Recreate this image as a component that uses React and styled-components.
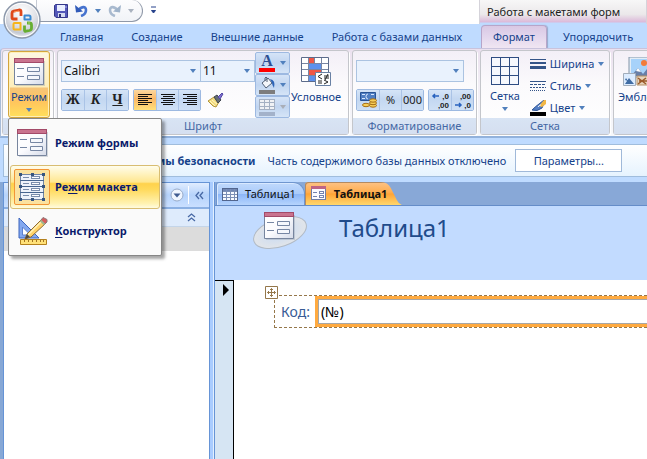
import React from "react";
import styled, { createGlobalStyle, css } from "styled-components";

const GlobalStyle = createGlobalStyle`
  *, *::before, *::after { box-sizing: border-box; }
  body {
    margin: 0;
    background: #fff;
    font: 11px/16px "Noto Sans", "Open Sans", sans-serif;
    color: #15428b;
  }
  #root { height: 100vh; }
  button, input, select { font: inherit; color: inherit; margin: 0; }
  button { background: none; border: 0; padding: 0; cursor: default; }
  svg { display: block; flex: none; }
  u { text-underline-offset: 2px; }
`;

/* ---------- page frame ---------- */
const Page = styled.div`
  display: flex;
  flex-direction: column;
  min-width: 0;
  min-height: 100vh;
  overflow: clip;
  background: #bfdbff;
`;

const Header = styled.header`
  position: relative;
  display: flex;
  white-space: nowrap;
  background: linear-gradient(#fff 24px, #bfdbff 24px);
`;

const OfficeButton = styled.button`
  position: absolute;
  left: 3px;
  top: 1px;
  z-index: 2;
`;

const MainTabs = styled.div`
  display: flex;
  flex-direction: column;
  padding-left: 36px;
`;

const TitleRow = styled.div`
  display: flex;
  align-items: flex-start;
  height: 24px;
`;

const QuickAccess = styled.div`
  display: flex;
  align-items: center;
  gap: 7px;
  width: 107px;
  height: 22px;
  padding-left: 17px;
  border: 1px solid #8f98a8;
  border-top: 0;
  border-left-color: #c5cad4;
  border-radius: 0 12px 12px 0;
  background: linear-gradient(#fdfdfe, #f1f3f7);
`;

const UndoPair = styled.span`
  display: flex;
  align-items: center;
  gap: 7px;
`;

const Customize = styled.button`
  margin: 6px 0 0 7px;
`;

const TabRow = styled.nav`
  display: flex;
  height: 24px;
  padding-left: ${(p) => (p.$inset ? "10px" : "0")};
`;

const RibbonTab = styled.button`
  padding: 1px 14px 0;
  ${(p) =>
    p.$active &&
    css`
      margin: 1px 2px 0;
      padding: 0 11px 1px;
      border: 1px solid #b7a5c9;
      border-bottom: 0;
      border-radius: 4px 4px 0 0;
      background: linear-gradient(#d9c8e4, #e2d5ec 45%, #f0e6f2);
      box-shadow: 1px 0 1px #97a9c9;
    `}
`;

const ContextGroup = styled.div`
  display: flex;
  flex-direction: column;
  margin-left: 3px;
`;

const ContextTitle = styled.div`
  height: 24px;
  padding: 4px 7px 0;
  border: solid #d5d3da;
  border-width: 0 1px;
  color: #222;
  background: linear-gradient(#f7f7f7, #ebe8ea 60%, #dcb9d9 22px, #bfdbff 23px);
`;

/* ---------- ribbon ---------- */
const Ribbon = styled.div`
  position: relative;
  z-index: 1;
  display: flex;
  gap: 3px;
  padding: 1px 0 1px 1px;
  height: 90px;
  white-space: nowrap;
  border-top: 1px solid #c9c3dc;
  border-left: 1px solid #a8bcd8;
  border-bottom: 2px solid #92b2dc;
  border-radius: 4px 0 0 0;
  background: linear-gradient(#ebe1ef, #f3eff6 40%, #f6f8fb);
`;

const Group = styled.section`
  display: flex;
  flex-direction: column;
  flex: none;
  width: ${(p) => p.$width}px;
  border: 1px solid #c4c6cb;
  border-radius: 3px;
  background: linear-gradient(#f3eff7, #fbfafc 40%, #fff);
  box-shadow: 1px 1px 0 #fff;
`;

const GroupBody = styled.div`
  display: flex;
  flex: 1;
  padding: 0 3px;
`;

const GroupLabel = styled.h2`
  margin: 0;
  height: 16px;
  font: inherit;
  text-align: center;
  color: #4468a5;
  background: linear-gradient(#d8e4f4, #d5dff0);
`;

const LargeButton = styled.button`
  display: flex;
  flex-direction: column;
  align-items: center;
  gap: 3px;
  padding: 6px ${(p) => (p.$roomy ? 6 : 1)}px 0;
`;

const ModeWrap = styled.div`
  position: relative;
  margin-left: 2px;
`;

const ModeButton = styled(LargeButton)`
  width: 42px;
  height: 67px;
  border: 1px solid #d3a53c;
  border-radius: 3px;
  background: linear-gradient(#fdf7e2, #fdeebb 35px, #f6c478 36px, #ffc55d 50px, #ffe05c);
  box-shadow: inset 0 0 0 1px #fff0b8;
`;

const ControlStack = styled.div`
  display: flex;
  flex-direction: column;
  padding-top: 9px;
`;

const ControlRow = styled.div`
  display: flex;
  align-items: center;
  margin-bottom: 7px;
`;

const Combo = styled.span`
  position: relative;
  display: flex;
  align-items: center;
  width: ${(p) => p.$width}px;
  height: 22px;
  border: 1px solid #abc3e1;
  border-right-width: ${(p) => (p.$joined ? 0 : 1)}px;
  background: #e9f2fd;
`;

const ComboSelect = styled.select`
  flex: 1;
  width: 100%;
  height: 20px;
  padding: 0 2px;
  border: 0;
  appearance: none;
  font-size: 12px;
  color: #111;
  background: none;
`;

const ComboArrow = styled.span`
  position: absolute;
  right: 4px;
  top: 8px;
  pointer-events: none;
`;

const ButtonSet = styled.div`
  display: flex;
  flex: none;
  margin-right: 4px;
  border: 1px solid #9db9e1;
  border-radius: 2px;
`;

const SmallButton = styled.button`
  display: flex;
  align-items: center;
  justify-content: center;
  width: 22px;
  height: 20px;
  color: #222;
  background: ${(p) =>
    p.$active
      ? "linear-gradient(#fcd79f, #fbb866 45%, #ffe07a)"
      : "linear-gradient(#d5e4f7, #c3d7f1 45%, #cfe0f5)"};
  & + & { border-left: 1px solid #aac3e6; }
`;

const Letter = styled.b`
  font: bold 14px/18px "Liberation Serif", serif;
  font-style: ${(p) => (p.$italic ? "italic" : "normal")};
  text-decoration: ${(p) => (p.$under ? "underline" : "none")};
`;

const BrushButton = styled.button`
  margin-left: 3px;
`;

const ColorStack = styled.div`
  display: flex;
  flex-direction: column;
  padding-top: 1px;
`;

const ColorButton = styled.button`
  display: flex;
  align-items: center;
  justify-content: space-between;
  width: 35px;
  height: 22px;
  padding: 0 3px;
  border: 1px solid #9db9e1;
  border-radius: 2px;
  background: linear-gradient(#d5e4f7, #c1d5f0 50%, #d5e4f7);
`;

const LineList = styled.div`
  display: flex;
  flex-direction: column;
  padding: 1px 0 0 4px;
`;

const LineButton = styled.button`
  display: flex;
  align-items: center;
  gap: 4px;
  height: 22px;
  padding-top: 1px;
  font-size: ${(p) => (p.$large ? 12 : 11)}px;
`;

/* ---------- drop-down menu ---------- */
const Menu = styled.div`
  position: absolute;
  left: 0;
  top: 67px;
  width: 154px;
  padding: 2px 1px;
  border: 1px solid #868686;
  border-radius: 2px;
  background: #fafafa;
  box-shadow: 3px 3px 3px rgba(0, 0, 0, 0.35);
`;

const MenuItem = styled.button`
  display: flex;
  align-items: center;
  gap: 5px;
  width: 100%;
  height: 44px;
  padding-left: 3px;
  border: 1px solid ${(p) => (p.$active ? "#d8bd72" : "transparent")};
  border-radius: 3px;
  font-weight: bold;
  color: #0a1a6b;
  background: ${(p) =>
    p.$active ? "linear-gradient(#fffdec, #ffe790 38%, #ffd24c 42%, #ffd95a 55%, #fff3b4 90%, #fffbe0)" : "none"};
`;

const MenuIcon = styled.span`
  display: flex;
  align-items: center;
  justify-content: center;
  width: 36px;
  height: 36px;
  border: 1px solid ${(p) => (p.$active ? "#f29536" : "transparent")};
  border-radius: 2px;
  background: ${(p) => (p.$active ? "#fbe29f" : "none")};
`;

/* ---------- message bar ---------- */
const MessageBar = styled.div`
  display: flex;
  align-items: center;
  height: 33px;
  margin: 6px 0 5px 3px;
  padding-left: 4px;
  white-space: nowrap;
  border: 1px solid #a0bddd;
  border-right: 0;
  background: linear-gradient(#fff, #e6f3fe);
`;

const Warning = styled.strong`
  margin: 0 12px 0 3px;
`;

const OptionsButton = styled.button`
  width: 107px;
  height: 23px;
  margin-left: 9px;
  border: 1px solid #a0b9d9;
  background: #fff;
`;

/* ---------- workspace ---------- */
const Workspace = styled.main`
  display: flex;
  flex: 1;
  border-left: 3px solid #87a8d6;
`;

const NavPane = styled.aside`
  display: flex;
  flex-direction: column;
  width: 207px;
  flex: none;
  border: solid #6694d6;
  border-width: 1px 1px 0;
  background: #fff;
`;

const NavHeader = styled.div`
  display: flex;
  align-items: center;
  justify-content: flex-end;
  gap: 4px;
  height: 26px;
  padding-right: 5px;
  border-bottom: 2px solid #8bb0e3;
  background: linear-gradient(#e1edff, #b6d3fb 50%, #c9dfff);
`;

const NavDivider = styled.span`
  width: 1px;
  height: 18px;
  margin: 0 2px 0 0;
  background: #fff;
`;

const NavSection = styled.div`
  display: flex;
  align-items: center;
  justify-content: flex-end;
  height: 18px;
  padding-right: 13px;
  border-bottom: 1px solid #c4d5e9;
  background: #deebfc;
`;

const NavSelected = styled.div`
  height: 24px;
  background: #dcdcdc;
`;

const Splitter = styled.div`
  width: 5px;
  flex: none;
  border-right: 1px solid #6694d6;
  background: linear-gradient(90deg, #a9ccff 3px, #e3f0ff 3px);
`;

const Document = styled.section`
  display: flex;
  flex-direction: column;
  flex: 1;
  min-width: 0;
`;

const DocTabs = styled.div`
  display: flex;
  height: 24px;
  padding-left: 1px;
  border-bottom: 1px solid #658dc9;
  background: #88a8d7;
`;

const DocTab = styled.button`
  display: flex;
  align-items: center;
  gap: 7px;
  height: 23px;
  padding: 0 8px 0 5px;
  color: #111;
  border: 1px solid #6f96cf;
  border-bottom: 0;
  border-radius: 3px 12px 0 0;
  background: linear-gradient(#c0d9fc, #aacbfa 48%, #8db7f7 52%, #b6d4fd);
  box-shadow: inset 1px 1px 0 #d9e9ff;
`;

const ActiveDocTab = styled(DocTab)`
  width: 97px;
  padding: 0 0 0 6px;
  font-weight: bold;
  border: 0;
  border-radius: 3px 0 0 0;
  clip-path: path("M0 24V3Q0 0 3 0H76Q83 0 86 6L92 18Q94 22 97 23V24Z");
  background: linear-gradient(#fdc388, #ffad4e 45%, #ffa436 52%, #ffd76c);
  box-shadow: inset 1px 1px 0 #b38a62;
`;

const FormHeader = styled.header`
  display: flex;
  align-items: flex-start;
  gap: 31px;
  height: 74px;
  padding: 6px 0 0 38px;
  background: #c2dbff;
`;

const FormTitle = styled.h1`
  margin: 0;
  font-size: 24px;
  line-height: 32px;
  font-weight: normal;
  color: #1f4b8b;
`;

const FormBody = styled.div`
  display: flex;
  flex: 1;
  background: #fff;
`;

const RecordSelector = styled.div`
  width: 19px;
  padding: 3px 0 0 7px;
  border: solid #000;
  border-width: 1px 1px 0 0;
  background: #d6e5f3;
`;

const FieldRow = styled.div`
  position: relative;
  display: flex;
  flex: 1;
  align-items: center;
  height: 33px;
  margin: 15px 0 0 40px;
  padding-left: 6px;
  border: 1px dashed #95774a;
  border-right: 0;
  font-size: 14px;
  color: #385c96;
`;

const MoveHandle = styled.button`
  position: absolute;
  left: -10px;
  top: -10px;
  background: #fff;
`;

const FieldInput = styled.input`
  flex: 1;
  min-width: 0;
  height: 31px;
  margin-left: 5px;
  padding: 0 3px;
  border: 3px solid #ffaa40;
  border-right: 0;
  border-radius: 0;
  outline: 0;
  color: #000;
  background: #fff;
  box-shadow: inset 1px 1px #a6a6a6, inset 0 -1px #a6a6a6;
`;

/* ---------- icons ---------- */
const Arrow = ({ color = "#5180bd" }) => (
  <svg width="6" height="4" viewBox="0 0 6 4" aria-hidden="true">
    <path d="M0 0H6L3 4Z" fill={color} />
  </svg>
);

const OfficeLogo = () => (
  <svg width="38" height="38" viewBox="0 0 38 38">
    <defs>
      <radialGradient id="orb" cx="50%" cy="28%" r="75%">
        <stop offset="0" stopColor="#fff" />
        <stop offset=".5" stopColor="#e2e3e8" />
        <stop offset=".78" stopColor="#c3c8d3" />
        <stop offset="1" stopColor="#fff" />
      </radialGradient>
    </defs>
    <circle cx="19" cy="19" r="18" fill="url(#orb)" stroke="#8c98aa" strokeWidth="1.4" />
    <circle cx="19" cy="19" r="16.6" fill="none" stroke="#fff" strokeWidth="1" />
    <g fill="none" strokeLinejoin="round">
      <path d="M14.500 18H10.500Q9 18 9 16.500V12Q9 10.500 10.500 10.200L16 9Q18 8.700 18 10.500V15" stroke="#df481b" strokeWidth="2.800" />
      <path d="M21.500 15V14.500H26Q27.500 14.500 27.500 16V18.500H21.500Z" stroke="#3988d1" strokeWidth="2" />
      <path d="M17.500 22H11.500Q10.500 22 10.500 23V27.500Q10.500 28.500 11.500 28.500H17.500Z" stroke="#f6b51b" strokeWidth="2" />
      <path d="M24 22H26.500Q28.500 22 28.500 24V27Q28.500 29 26.500 29.500L23 30.200Q21.500 30.500 21.500 29V24.500" stroke="#67ae31" strokeWidth="2.800" />
    </g>
    <path d="M11 11L16 10" stroke="#ff9d61" />
    <path d="M25 22H27" stroke="#a8d865" />
  </svg>
);

const SaveIcon = () => (
  <svg width="14" height="14" viewBox="0 0 14 14">
    <path d="M.5 1.500L1.500.500H13.500V13.500H2L.5 12Z" fill="#5357b8" stroke="#34378a" />
    <path d="M3 1H11V7H3Z" fill="#e9eeff" />
    <path d="M4 9H11V13H4Z" fill="#d4daef" />
    <path d="M5 10H7V13H5Z" fill="#303477" />
    <path d="M12 2V4" stroke="#b1b5f2" />
  </svg>
);

const UndoIcon = ({ muted, flip }) => (
  <svg width="13" height="13" viewBox="0 0 13 13">
    <g transform={flip ? "matrix(-1 0 0 1 13 0)" : undefined}>
      <path d="M3 7C6 2 11 2 11 6C11 9 9 11 6 12" fill="none" stroke={muted ? "#a9bacf" : "#4673cf"} strokeWidth="2.600" />
      <path d="M0 1L1 8.500L8 7.500Z" fill={muted ? "#9fb3ca" : "#315bb9"} />
    </g>
  </svg>
);

const CustomizeIcon = () => (
  <svg width="7" height="8" viewBox="0 0 7 8">
    <path d="M1 1H6M1.500 4.500L3.500 7L5.500 4.500Z" fill="#27438c" stroke="#27438c" />
  </svg>
);

const FormShape = () => (
  <>
    <path d="M2 3H31V28H2Z" fill="#8994a5" opacity=".35" />
    <path d="M.5.500H29.500V26.500H.500Z" fill="url(#paper)" stroke="#77859e" />
    <path d="M0 0H30V5H0Z" fill="#a34a69" />
    <path d="M1 1H29V4H1Z" fill="#c9738e" />
    <path d="M3 10.500H10M3 18.500H10M13.500 9.500H25.500V13.500H13.500ZM13.500 17.500H25.500V21.500H13.500Z" fill="#f5f7fc" stroke="#7686a3" />
  </>
);

const PaperDefs = () => (
  <defs>
    <linearGradient id="paper" x2="1" y2="1">
      <stop stopColor="#fff" />
      <stop offset=".5" stopColor="#fbfbfe" />
      <stop offset="1" stopColor="#d5dbe9" />
    </linearGradient>
  </defs>
);

const FormIcon = () => (
  <svg width="31" height="28" viewBox="0 0 31 28">
    <PaperDefs />
    <FormShape />
  </svg>
);

const SmallFormIcon = () => (
  <svg width="16" height="15" viewBox="0 0 16 15" shapeRendering="crispEdges">
    <path d="M.5.500H14.500V13.500H.500Z" fill="#fafaff" stroke="#6e7ca5" />
    <path d="M0 0H15V3H0Z" fill="#be6484" />
    <path d="M2 6.500H6M2 10.500H6M8.500 5.500H12.500V7.500H8.500ZM8.500 9.500H12.500V11.500H8.500Z" fill="#fff" stroke="#7382ae" />
  </svg>
);

const LayoutIcon = () => (
  <svg width="26" height="28" viewBox="0 0 26 28" shapeRendering="crispEdges">
    <path d="M1.500 1.500H24.500V26.500H1.500Z" fill="#eef2fa" stroke="#7185a5" />
    <path d="M1 7.500H25M1 13.500H25M1 19.500H25" stroke="#47658f" />
    {[3, 9, 15, 21].map((y) => (
      <path key={y} d={`M4 ${y + 1.5}H10M12.500 ${y + 0.5}H20.500V${y + 2.5}H12.500Z`} fill="#fff" stroke="#7a8dab" />
    ))}
    <g fill="#35547f">
      {[0, 12, 23].map((x) =>
        [0, 12, 25].filter((y) => x !== 12 || y !== 12).map((y) => <rect key={`${x}-${y}`} x={x} y={y} width="3" height="3" />)
      )}
    </g>
  </svg>
);

const DesignIcon = () => (
  <svg width="31" height="28" viewBox="0 0 31 28">
    <path d="M2 1V21H22Z" fill="#83a8ef" stroke="#3d65bd" />
    <path d="M5.500 10V18H13.500Z" fill="#fff" stroke="#5c80ce" />
    <path d="M8 22L10 17L25 2L29 6L14 20Z" fill="#ffd269" stroke="#8d6a34" />
    <path d="M11 18L26 3" stroke="#fff3ba" strokeWidth="1.500" />
    <path d="M24 3L26 .500L30 2.500V5L28 7Z" fill="#d85c5c" stroke="#8b7a7a" />
    <path d="M23.500 3.500L27.500 7.500" stroke="#a3b58e" strokeWidth="2" />
    <path d="M8 22L10 17L13 20Z" fill="#4d4a44" />
    <path d="M3.500 22.500H29.500V27.500H3.500Z" fill="#ffe178" stroke="#b3801d" />
    <path d="M7.500 23V25M11.500 23V25M15.500 23V25M19.500 23V25M23.500 23V25M26.500 23V25" stroke="#a37420" />
  </svg>
);

const AlignIcon = ({ kind }) => {
  const widths = [14, 10, 14, 10, 14, 10];
  return (
    <svg width="14" height="12" viewBox="0 0 14 12" shapeRendering="crispEdges">
      {widths.map((w, i) => (
        <rect key={i} x={kind === "left" ? 0 : kind === "center" ? (14 - w) / 2 : 14 - w} y={i * 2} width={w} height="1" fill="#111" />
      ))}
    </svg>
  );
};

const BrushIcon = () => (
  <svg width="16" height="16" viewBox="0 0 16 16">
    <path d="M0 9L6 5L11 10L8 15L5 14Z" fill="#f2db7d" stroke="#b1943b" />
    <path d="M2 9L7 14M4 8L9 12" stroke="#fff6c5" />
    <path d="M6 5L9 3L13 8L10 11Z" fill="#646d75" stroke="#3e454e" />
    <path d="M10 5L14 1L15 2L12 7Z" fill="#8170cf" stroke="#5148a4" />
  </svg>
);

const FontColorIcon = () => (
  <svg width="17" height="18" viewBox="0 0 17 18">
    <text x="8" y="12" textAnchor="middle" fontFamily="Liberation Serif, serif" fontWeight="bold" fontSize="16" fill="#2e4f92">A</text>
    <path d="M0 14H16V18H0Z" fill="#f00" />
  </svg>
);

const FillIcon = () => (
  <svg width="17" height="18" viewBox="0 0 17 18">
    <path d="M3 7L9 2L13 7L7 12Z" fill="#f4f6fa" stroke="#536177" />
    <path d="M6 5V2Q7 0 8 2V6" fill="none" stroke="#536177" />
    <path d="M11 3Q17 4 15 12Q13 9 13 7Z" fill="#2d64b6" />
    <path d="M0 14H16V18H0Z" fill="#7d7d7d" />
  </svg>
);

const BorderIcon = () => (
  <svg width="17" height="18" viewBox="0 0 17 18" shapeRendering="crispEdges">
    <path d="M.5 1.500H15.500V11.500H.500ZM5.500 1V12M10.500 1V12M1 4.500H15M1 8.500H15" fill="#f0f2f5" stroke="#a5b1c3" />
    <path d="M0 14H16V18H0Z" fill="#a3b2ca" />
  </svg>
);

const ConditionalIcon = () => (
  <svg width="30" height="29" viewBox="0 0 30 29">
    <path d="M.5.500H27.500V24.500H.500Z" fill="#fff" stroke="#5c6b8b" />
    <path d="M7 1H14V6H7ZM7 13H20V18H7Z" fill="#ee5646" />
    <path d="M7 7H20V12H7ZM7 19H14V24H7Z" fill="#5d91ed" />
    <path d="M1 6.500H27M1 12.500H27M1 18.500H27M7.500 1V24M13.500 1V6M20.500 1V24" stroke="#7885a3" fill="none" />
    <path d="M14.500 15.500H29.500V28.500H14.500Z" fill="#fff" stroke="#6981a4" />
    <path d="M21 17L17 19.500L21 22M17 24H21M17 26H21M23 19H28M23 21H28M27 17L24 23M23 23L27 25L23 27" fill="none" stroke="#222" />
  </svg>
);

const MoneyIcon = () => (
  <svg width="17" height="16" viewBox="0 0 17 16">
    <path d="M.5.500H15.500V8.500H.500Z" fill="#4f7ec2" stroke="#285395" />
    <path d="M2 2.500H5M11 2.500H14M2 6.500H5M8 2A2 2.500 0 1 0 8 7" stroke="#d9e8ff" fill="none" />
    <g fill="#f6ce58" stroke="#a66e15">
      <ellipse cx="13" cy="13.500" rx="3.500" ry="1.700" />
      <ellipse cx="13" cy="11" rx="3.500" ry="1.700" />
      <ellipse cx="13" cy="8.500" rx="3.500" ry="1.700" />
      <ellipse cx="6" cy="13" rx="3.500" ry="1.700" />
    </g>
  </svg>
);

const DecimalIcon = ({ less }) => (
  <svg width="19" height="19" viewBox="0 0 19 19" fontFamily="Liberation Sans, sans-serif" fontWeight="bold" fontSize="8" fill="#222">
    <text x="18" y="8" textAnchor="end">{less ? ",00" : ",0"}</text>
    <text x="18" y="17" textAnchor="end">{less ? ",0" : ",00"}</text>
    <path d={less ? "M2 14H8M6 12L8 14L6 16" : "M8 5H2M4 3L2 5L4 7"} fill="none" stroke="#2862be" strokeWidth="1.500" />
  </svg>
);

const GridIcon = () => (
  <svg width="28" height="28" viewBox="0 0 28 28" shapeRendering="crispEdges">
    <path d="M.5.500H27.500V27.500H.500ZM9.500 0V28M18.500 0V28M0 9.500H28M0 18.500H28" fill="#f6f8fd" stroke="#2e4c82" />
  </svg>
);

const WidthIcon = () => (
  <svg width="16" height="12" viewBox="0 0 16 12" shapeRendering="crispEdges">
    <path d="M0 1H16V2H0ZM0 4H16V6H0ZM0 8H16V11H0Z" fill="#345488" />
  </svg>
);

const StyleIcon = () => (
  <svg width="16" height="12" viewBox="0 0 16 12" shapeRendering="crispEdges" stroke="#345488">
    <path d="M0 1.500H16" />
    <path d="M0 4.500H16" strokeDasharray="3 1" />
    <path d="M0 7.500H16" strokeDasharray="2 1" />
    <path d="M0 10.500H16" strokeDasharray="1 1" />
  </svg>
);

const LineColorIcon = () => (
  <svg width="16" height="16" viewBox="0 0 16 16">
    <path d="M2 10Q6 6 9 4L14 0L15 1L12 8Q7 12 2 10Z" fill="#547fc5" stroke="#305697" />
    <path d="M9 6L14 0H16V4L12 7Z" fill="#f2b745" />
    <path d="M8 7Q10 4 11 5" stroke="#e9f0ff" fill="none" />
    <path d="M0 12H16V16H0Z" fill="#000" />
  </svg>
);

const EmblemIcon = () => (
  <svg width="40" height="29" viewBox="0 1 40 29">
    <path d="M6 1H38V21H6Z" fill="#e3edf6" stroke="#8295a9" />
    <path d="M8 3H38V19H8Z" fill="#a7d2fa" />
    <circle cx="21" cy="7" r="3" fill="#f37b3a" />
    <path d="M8 20L15 12L20 18L28 8L38 20Z" fill="#687fa7" />
    <path d="M13 15L15 12L18 16Z" fill="#fff" />
    <path d="M.5 17.500H12.500V29.500H.500Z" fill="#dcecff" stroke="#a2adba" />
    <path d="M2 28L6 22L11 28ZM2 24L3 22L5 25Z" fill="#416da4" />
    <path d="M14 20H38V29H14Z" fill="#e7d5bd" stroke="#b39067" />
    <path d="M15 22L23 28M15 28L23 22M16 25H25" stroke="#9b5a2a" strokeWidth="1.500" />
  </svg>
);

const ShieldIcon = () => (
  <svg width="12" height="14" viewBox="0 0 12 14">
    <path d="M6 0L12 2V7Q11 11 6 14Q1 11 0 7V2Z" fill="#535f75" />
  </svg>
);

const NavMenuIcon = () => (
  <svg width="14" height="14" viewBox="0 0 14 14">
    <circle cx="7" cy="7" r="6" fill="#eff5ff" stroke="#98abc9" />
    <path d="M3.500 5.500H10.500L7 9.500Z" fill="#405c91" />
  </svg>
);

const CollapseIcon = ({ up }) => (
  <svg width="9" height="9" viewBox="0 0 9 9">
    <path d={up ? "M1 4L4.500 1L8 4M1 8L4.500 5L8 8" : "M4 1L1 4.500L4 8M8 1L5 4.500L8 8"} fill="none" stroke="#4869a5" strokeWidth="1.300" />
  </svg>
);

const TableIcon = () => (
  <svg width="16" height="13" viewBox="0 0 16 13" shapeRendering="crispEdges">
    <path d="M.5.500H15.500V12.500H.500Z" fill="#f7faff" stroke="#52668e" />
    <path d="M1 1H15V3H1Z" fill="#6f86b4" />
    <path d="M1 3.500H15M1 6.500H15M1 9.500H15M4.500 1V12M8.500 1V12M12.500 1V12" stroke="#7b8fb6" />
  </svg>
);

const FormLogo = () => (
  <svg width="55" height="40" viewBox="0 0 55 40">
    <defs>
      <radialGradient id="halo">
        <stop stopColor="#c5d9f4" />
        <stop offset="1" stopColor="#e2e5e9" />
      </radialGradient>
    </defs>
    <ellipse cx="27" cy="20.500" rx="27.500" ry="14" transform="rotate(-19 27 20.500)" fill="url(#halo)" stroke="#b1bac5" />
    <g transform="translate(11 0)"><PaperDefs /><FormShape /></g>
  </svg>
);

const RecordArrow = () => (
  <svg width="7" height="12" viewBox="0 0 7 12">
    <path d="M1 0L7 6L1 12Z" fill="#000" />
  </svg>
);

const MoveIcon = () => (
  <svg width="13" height="13" viewBox="0 0 13 13" fill="none" stroke="#95774a">
    <path d="M.5.500H12.500V12.500H.500ZM6.500 2.500V10.500M2.500 6.500H10.500M5 4L6.500 2.500L8 4M5 9L6.500 10.500L8 9M4 5L2.500 6.500L4 8M9 5L10.500 6.500L9 8" />
  </svg>
);

/* ---------- data ---------- */
const tabs = ["Главная", "Создание", "Внешние данные", "Работа с базами данных"];
const lineTools = [
  ["Ширина", WidthIcon],
  ["Стиль", StyleIcon],
  ["Цвет", LineColorIcon],
];

const FontCombo = ({ label, value, width, joined }) => (
  <Combo $width={width} $joined={joined}>
    <ComboSelect aria-label={label} defaultValue={value}><option>{value}</option></ComboSelect>
    <ComboArrow><Arrow /></ComboArrow>
  </Combo>
);

export default function App() {
  return (
    <Page>
      <GlobalStyle />
      <Header>
        <OfficeButton aria-label="Office"><OfficeLogo /></OfficeButton>
        <MainTabs>
          <TitleRow>
            <QuickAccess>
              <button aria-label="Сохранить"><SaveIcon /></button>
              <UndoPair>
                <button aria-label="Отменить"><UndoIcon /></button>
                <Arrow />
              </UndoPair>
              <UndoPair>
                <button aria-label="Вернуть"><UndoIcon muted flip /></button>
                <Arrow color="#a9b2bf" />
              </UndoPair>
            </QuickAccess>
            <Customize aria-label="Настройка панели"><CustomizeIcon /></Customize>
          </TitleRow>
          <TabRow $inset>
            {tabs.map((t) => <RibbonTab key={t}>{t}</RibbonTab>)}
          </TabRow>
        </MainTabs>
        <ContextGroup>
          <ContextTitle>Работа с макетами форм</ContextTitle>
          <TabRow>
            <RibbonTab $active>Формат</RibbonTab>
            <RibbonTab>Упорядочить</RibbonTab>
          </TabRow>
        </ContextGroup>
      </Header>

      <Ribbon>
        <Group $width={52}>
          <GroupBody>
            <ModeWrap>
              <ModeButton aria-expanded="true"><FormIcon /><span>Режим</span><Arrow /></ModeButton>
              <Menu role="menu">
                <MenuItem role="menuitem"><MenuIcon><FormIcon /></MenuIcon><span>Режим ф<u>о</u>рмы</span></MenuItem>
                <MenuItem role="menuitem" $active><MenuIcon $active><LayoutIcon /></MenuIcon><span>Ре<u>ж</u>им макета</span></MenuItem>
                <MenuItem role="menuitem"><MenuIcon><DesignIcon /></MenuIcon><span><u>К</u>онструктор</span></MenuItem>
              </Menu>
            </ModeWrap>
          </GroupBody>
          <GroupLabel />
        </Group>

        <Group $width={292}>
          <GroupBody>
            <ControlStack>
              <ControlRow>
                <FontCombo label="Шрифт" value="Calibri" width={139} joined />
                <FontCombo label="Размер шрифта" value="11" width={55} />
              </ControlRow>
              <ControlRow>
                <ButtonSet>
                  <SmallButton aria-label="Полужирный"><Letter>Ж</Letter></SmallButton>
                  <SmallButton aria-label="Курсив"><Letter $italic>К</Letter></SmallButton>
                  <SmallButton aria-label="Подчеркнутый"><Letter $under>Ч</Letter></SmallButton>
                </ButtonSet>
                <ButtonSet>
                  <SmallButton $active aria-label="По левому краю"><AlignIcon kind="left" /></SmallButton>
                  <SmallButton aria-label="По центру"><AlignIcon kind="center" /></SmallButton>
                  <SmallButton aria-label="По правому краю"><AlignIcon kind="right" /></SmallButton>
                </ButtonSet>
                <BrushButton aria-label="Формат по образцу"><BrushIcon /></BrushButton>
              </ControlRow>
            </ControlStack>
            <ColorStack>
              <ColorButton aria-label="Цвет текста"><FontColorIcon /><Arrow /></ColorButton>
              <ColorButton aria-label="Заливка"><FillIcon /><Arrow /></ColorButton>
              <ColorButton aria-label="Сетка" disabled><BorderIcon /><Arrow color="#a9aeb8" /></ColorButton>
            </ColorStack>
            <LargeButton><ConditionalIcon /><span>Условное</span></LargeButton>
          </GroupBody>
          <GroupLabel>Шрифт</GroupLabel>
        </Group>

        <Group $width={125}>
          <GroupBody>
            <ControlStack>
              <ControlRow><FontCombo label="Формат" value="" width={108} /></ControlRow>
              <ControlRow>
                <ButtonSet>
                  <SmallButton aria-label="Денежный"><MoneyIcon /></SmallButton>
                  <SmallButton>%</SmallButton>
                  <SmallButton>000</SmallButton>
                </ButtonSet>
                <ButtonSet>
                  <SmallButton aria-label="Увеличить разрядность"><DecimalIcon /></SmallButton>
                  <SmallButton aria-label="Уменьшить разрядность"><DecimalIcon less /></SmallButton>
                </ButtonSet>
              </ControlRow>
            </ControlStack>
          </GroupBody>
          <GroupLabel>Форматирование</GroupLabel>
        </Group>

        <Group $width={130}>
          <GroupBody>
            <LargeButton $roomy><GridIcon /><span>Сетка</span><Arrow /></LargeButton>
            <LineList>
              {lineTools.map(([name, Icon]) => (
                <LineButton key={name}><Icon />{name}<Arrow /></LineButton>
              ))}
            </LineList>
          </GroupBody>
          <GroupLabel>Сетка</GroupLabel>
        </Group>

        <Group $width={200}>
          <GroupBody>
            <LargeButton><EmblemIcon /><span>Эмблема</span></LargeButton>
          </GroupBody>
          <GroupLabel />
        </Group>
      </Ribbon>

      <MessageBar role="status">
        <ShieldIcon />
        <Warning>Предупреждение системы безопасности</Warning>
        <span>Часть содержимого базы данных отключено</span>
        <OptionsButton>Параметры...</OptionsButton>
      </MessageBar>

      <Workspace>
        <NavPane>
          <NavHeader>
            <button aria-label="Меню области"><NavMenuIcon /></button>
            <NavDivider />
            <button aria-label="Свернуть область"><CollapseIcon /></button>
          </NavHeader>
          <NavSection><button aria-label="Свернуть раздел"><CollapseIcon up /></button></NavSection>
          <NavSelected />
        </NavPane>
        <Splitter />
        <Document>
          <DocTabs>
            <DocTab><TableIcon />Таблица1</DocTab>
            <ActiveDocTab><SmallFormIcon />Таблица1</ActiveDocTab>
          </DocTabs>
          <FormHeader>
            <FormLogo />
            <FormTitle>Таблица1</FormTitle>
          </FormHeader>
          <FormBody>
            <RecordSelector><RecordArrow /></RecordSelector>
            <FieldRow>
              <MoveHandle aria-label="Переместить макет"><MoveIcon /></MoveHandle>
              <label htmlFor="code">Код:</label>
              <FieldInput id="code" defaultValue="(№)" />
            </FieldRow>
          </FormBody>
        </Document>
      </Workspace>
    </Page>
  );
}
